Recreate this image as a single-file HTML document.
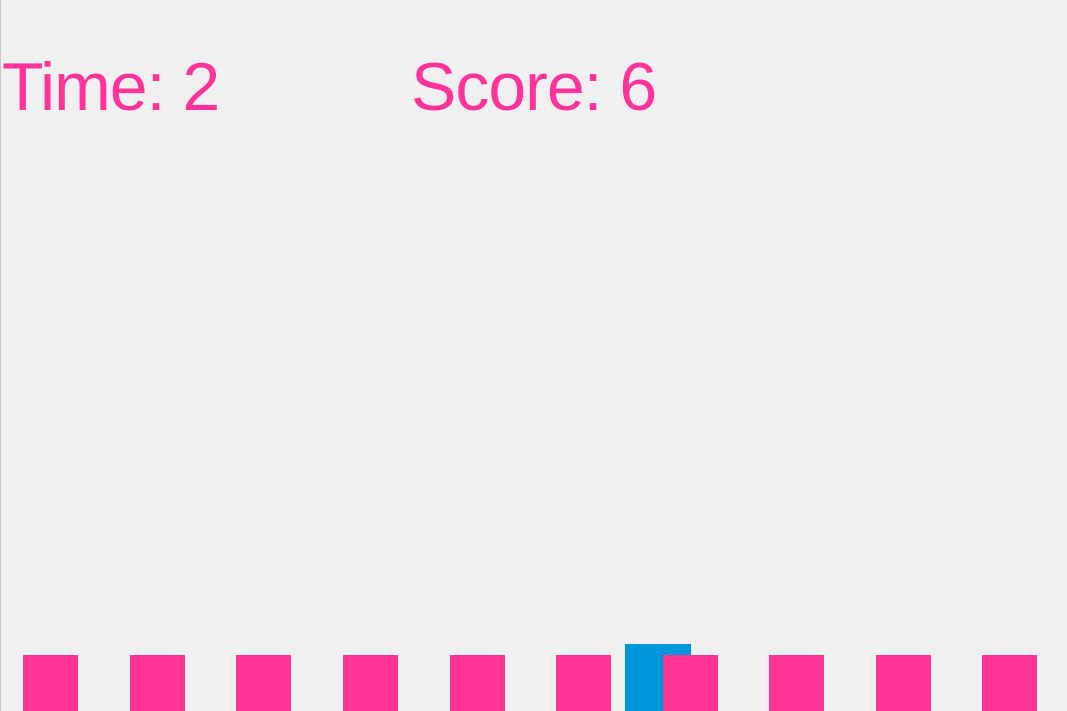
<!DOCTYPE html>
<html><head><style>
html,body{margin:0;padding:0;width:1067px;height:711px;overflow:hidden;background:#f0f0f0;position:relative}
.b{position:absolute;left:0;top:0;width:1px;height:711px;background:#c8c8c8}
.t{position:absolute;top:47px;font-family:"Liberation Sans",Arial,sans-serif;font-size:68px;line-height:80px;color:#ff3399;letter-spacing:-1px;white-space:nowrap}
.s{position:absolute;top:655px;width:55px;height:56px;background:#ff3393}
.p{position:absolute;left:625px;top:644px;width:66px;height:67px;background:#0096dc}
</style></head><body>
<div class="b"></div>
<div class="t" style="left:2px">Time: 2</div>
<div class="t" style="left:411px">Score: 6</div>
<div class="p"></div>
<div class="s" style="left:23px"></div>
<div class="s" style="left:130px"></div>
<div class="s" style="left:236px"></div>
<div class="s" style="left:343px"></div>
<div class="s" style="left:450px"></div>
<div class="s" style="left:556px"></div>
<div class="s" style="left:663px"></div>
<div class="s" style="left:769px"></div>
<div class="s" style="left:876px"></div>
<div class="s" style="left:982px"></div>
</body></html>
